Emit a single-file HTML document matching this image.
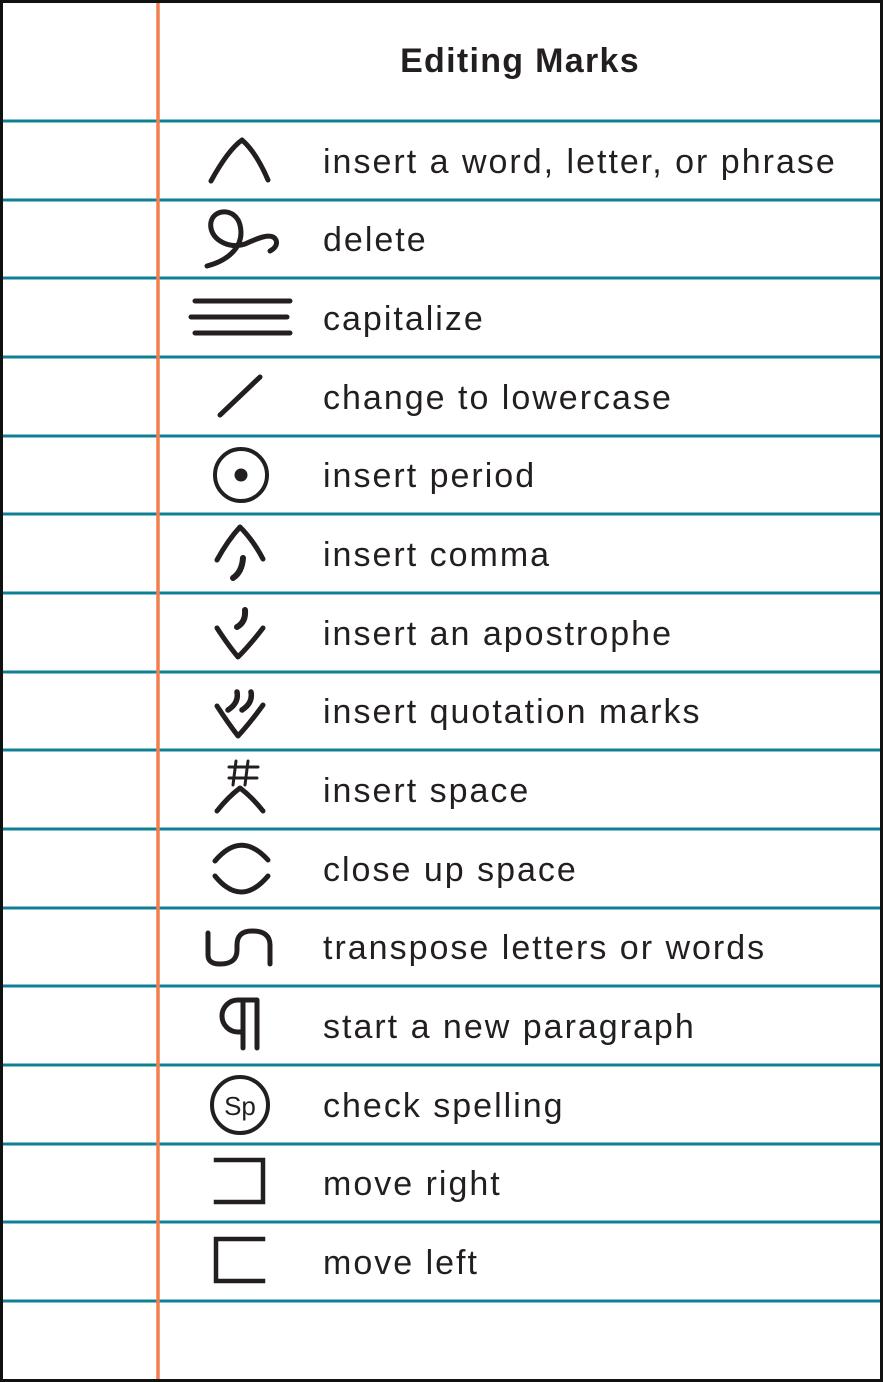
<!DOCTYPE html>
<html><head><meta charset="utf-8"><style>
html,body{margin:0;padding:0;background:#fff}
svg{display:block}
text{font-family:"Liberation Sans",sans-serif;fill:#231f20}
</style></head><body>
<svg width="883" height="1382" viewBox="0 0 883 1382" xmlns="http://www.w3.org/2000/svg">
<rect x="0" y="0" width="883" height="1382" fill="#fff"/>
<g stroke="#0f7f95" stroke-width="3">
<line x1="3" y1="121" x2="880" y2="121"/>
<line x1="3" y1="200" x2="880" y2="200"/>
<line x1="3" y1="278" x2="880" y2="278"/>
<line x1="3" y1="357" x2="880" y2="357"/>
<line x1="3" y1="436" x2="880" y2="436"/>
<line x1="3" y1="514" x2="880" y2="514"/>
<line x1="3" y1="593" x2="880" y2="593"/>
<line x1="3" y1="672" x2="880" y2="672"/>
<line x1="3" y1="750" x2="880" y2="750"/>
<line x1="3" y1="829" x2="880" y2="829"/>
<line x1="3" y1="908" x2="880" y2="908"/>
<line x1="3" y1="986" x2="880" y2="986"/>
<line x1="3" y1="1065" x2="880" y2="1065"/>
<line x1="3" y1="1144" x2="880" y2="1144"/>
<line x1="3" y1="1222" x2="880" y2="1222"/>
<line x1="3" y1="1301" x2="880" y2="1301"/>
</g>
<line x1="158" y1="0" x2="158" y2="1382" stroke="#f0804f" stroke-width="3.5"/>
<rect x="1.5" y="1.5" width="880" height="1379" fill="none" stroke="#111" stroke-width="3"/>
<text x="520" y="72" font-size="34" font-weight="bold" text-anchor="middle" letter-spacing="1.3">Editing Marks</text>
<g font-size="34" letter-spacing="2">
<text x="323" y="173">insert a word, letter, or phrase</text>
<text x="323" y="251">delete</text>
<text x="323" y="330">capitalize</text>
<text x="323" y="409">change to lowercase</text>
<text x="323" y="487">insert period</text>
<text x="323" y="566">insert comma</text>
<text x="323" y="645">insert an apostrophe</text>
<text x="323" y="723">insert quotation marks</text>
<text x="323" y="802">insert space</text>
<text x="323" y="881">close up space</text>
<text x="323" y="959">transpose letters or words</text>
<text x="323" y="1038">start a new paragraph</text>
<text x="323" y="1117">check spelling</text>
<text x="323" y="1195">move right</text>
<text x="323" y="1274">move left</text>
</g>
<g fill="none" stroke="#231f20" stroke-width="5" stroke-linecap="round" stroke-linejoin="round">
<path d="M211,181 Q228,150 242,140 Q256,152 268,180"/>
<path d="M207,266 C230,260 245,245 240,225 C236,208 214,208 211,222 C208,238 228,250 245,244 C258,238 272,232 276,240 C278,245 274,249 270,251"/>
<path d="M195,301 H290 M191,317 H287 M195,333 H290"/>
<path d="M220,415 L260,377"/>
<circle cx="241" cy="475" r="26" stroke-width="4"/>
<path d="M217,560 Q228,540 240,527 Q253,540 263,559"/>
<path d="M243,558 Q242,572 233,578" stroke-width="6"/>
<path d="M217,628 Q228,645 238,657 Q250,645 263,628"/>
<path d="M245,610 Q246,622 237,627" stroke-width="6"/>
<path d="M217,706 Q228,723 238,736 Q250,723 263,705"/>
<path d="M237,692 Q239,703 228,710 M251,692 Q253,703 242,710" stroke-width="5.5"/>
<path d="M217,811 Q228,797 240,788 Q252,797 263,811"/>
<path d="M236,761 L233,785 M248,761 L245,785 M229,767 H258 M229,778 H257" stroke-width="3"/>
<path d="M215,861 Q241,830 268,860"/>
<path d="M215,876 Q241,908 268,876"/>
<path d="M208,933 V955 Q208,964 220,964 Q237,964 237,950 V945 Q237,931 252,931 Q270,931 270,945 V964"/>
<path d="M257,1000 H238 A15,15 0 0 0 238,1032 H243 M243,1000 V1048 M257,1000 V1048"/>
<circle cx="240" cy="1105" r="28" stroke-width="4"/>
<path d="M216,1160 H263 V1202 H216" stroke-linecap="square" stroke-linejoin="miter" stroke-width="4.5"/>
<path d="M263,1239 H216 V1281 H263" stroke-linecap="square" stroke-linejoin="miter" stroke-width="4.5"/>
</g>
<text x="240" y="1115" font-size="26" text-anchor="middle">Sp</text>
<circle cx="241" cy="475" r="6.5" fill="#231f20"/>
</svg>
</body></html>
